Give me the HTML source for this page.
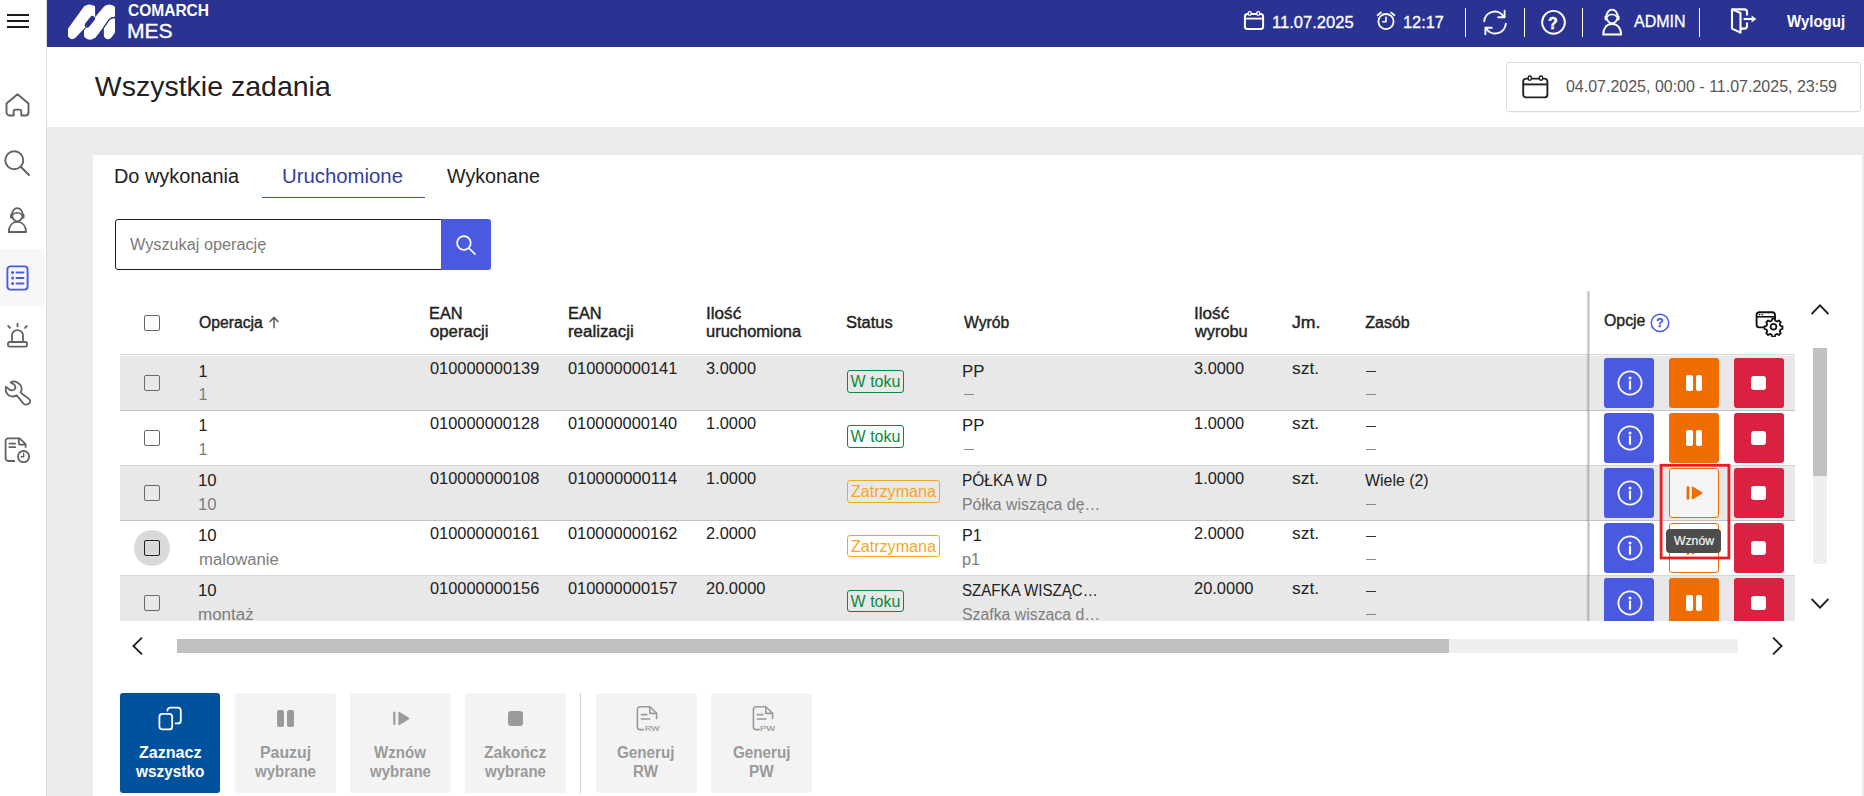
<!DOCTYPE html>
<html lang="pl"><head><meta charset="utf-8"><title>Wszystkie zadania - Comarch MES</title>
<style>
html,body{margin:0;padding:0}
body{width:1864px;height:796px;overflow:hidden;position:relative;background:#ececec;font-family:"Liberation Sans", sans-serif}
.r{position:absolute;display:block}
.t{position:absolute;white-space:nowrap;line-height:1;font-family:"Liberation Sans", sans-serif;transform-origin:0 50%}
</style></head><body>
<div class="r" style="left:0px;top:0px;width:1864px;height:796px;background:#ececec;"></div>
<div class="r" style="left:0px;top:0px;width:46px;height:796px;background:#fff;"></div>
<div class="r" style="left:46px;top:0px;width:1px;height:796px;background:#dcdcdc;"></div>
<div class="r" style="left:47px;top:0px;width:1817px;height:47px;background:#2a3392;"></div>
<div class="r" style="left:47px;top:47px;width:1817px;height:80px;background:#fff;"></div>
<div class="r" style="left:93px;top:155px;width:1769px;height:641px;background:#fff;"></div>
<div class="r" style="left:7px;top:14px;width:22px;height:2px;background:#1c1c1c;"></div>
<div class="r" style="left:7px;top:20px;width:22px;height:2px;background:#1c1c1c;"></div>
<div class="r" style="left:7px;top:26px;width:22px;height:2px;background:#1c1c1c;"></div>
<div class="r" style="left:0px;top:249px;width:45px;height:57px;background:#f7f7fa;border-radius:0 5px 5px 0"></div>
<svg class="r" style="left:3.6px;top:92px;" width="27" height="26" viewBox="0 0 27 26" fill="none"><path d="M2.5 11.4 L13.5 2.2 L24.5 11.4 V20.5 a3 3 0 0 1 -3 3 H17.3 V19.4 a1.8 1.8 0 0 0 -1.8 -1.8 h-4 a1.8 1.8 0 0 0 -1.8 1.8 V23.5 H5.5 a3 3 0 0 1 -3 -3 Z" stroke="#616161" stroke-width="1.9" stroke-linejoin="round"/></svg>
<svg class="r" style="left:3.4px;top:148.8px;" width="28" height="28" viewBox="0 0 28 28" fill="none"><circle cx="11.3" cy="11.3" r="9" stroke="#616161" stroke-width="1.9"/><path d="M18 18 L26 26" stroke="#616161" stroke-width="1.9" stroke-linecap="round"/></svg>
<svg class="r" style="left:0px;top:197px;" width="46" height="46" viewBox="0 0 46 46" fill="none"><ellipse cx="17.3" cy="17.7" rx="5.3" ry="6.6" stroke="#616161" stroke-width="1.8"/><path d="M11.3 18 v2.4 M23.3 18 v2.4" stroke="#616161" stroke-width="2.4" stroke-linecap="round"/><path d="M12.4 18.3 Q14.4 15.4 17 15.9 Q20 15.4 22.2 18.3" stroke="#616161" stroke-width="1.5"/><path d="M8.8 35 C9 28.5 12.5 24.9 17.3 24.9 C22.1 24.9 25.8 28.5 26 35 Z" stroke="#616161" stroke-width="1.9" stroke-linejoin="round"/></svg>
<svg class="r" style="left:5px;top:263.7px;" width="25" height="28" viewBox="0 0 25 28" fill="none"><rect x="2.4" y="2.4" width="20.2" height="23.2" rx="3" stroke="#4959e0" stroke-width="1.9"/><circle cx="7.6" cy="8.5" r="1.5" fill="#4959e0"/><circle cx="7.6" cy="14" r="1.5" fill="#4959e0"/><circle cx="7.6" cy="19.5" r="1.5" fill="#4959e0"/><path d="M11.5 8.5 h7 M11.5 14 h7 M11.5 19.5 h7" stroke="#4959e0" stroke-width="1.9" stroke-linecap="round"/></svg>
<svg class="r" style="left:5px;top:322px;" width="25" height="27" viewBox="0 0 25 27" fill="none"><path d="M7 20 V13.6 a5.5 5.5 0 0 1 11 0 V20" stroke="#616161" stroke-width="1.8"/><rect x="3" y="20" width="19" height="4.6" rx="1.6" stroke="#616161" stroke-width="1.8"/><path d="M12.5 1.6 v2.8 M3.2 4 l1.8 1.8 M21.8 4 l-1.8 1.8" stroke="#616161" stroke-width="1.8" stroke-linecap="round"/></svg>
<svg class="r" style="left:0px;top:370px;" width="46" height="46" viewBox="0 0 46 46" fill="none"><path d="M10.7 12.4 Q13 10.8 16 11.8 Q21.5 14 21.7 19 Q21.6 21 20.5 22.5 L28.9 28.9 Q31.5 31.8 28.6 33.8 Q26 35.6 23.4 33.6 L16.8 25.4 Q13 27.4 9.5 25.8 Q5 23 5.8 16.8 L9.8 19.9 Q12.6 21.2 14.8 19.2 Q16.4 16.8 14.2 14.5 Z" stroke="#616161" stroke-width="1.8" stroke-linejoin="round"/></svg>
<svg class="r" style="left:3px;top:436px;" width="29" height="29" viewBox="0 0 29 29" fill="none"><path d="M12 25 H5.2 a2.6 2.6 0 0 1 -2.6 -2.6 V5 a2.6 2.6 0 0 1 2.6 -2.6 H16.6 l6 5.8 V11.8" stroke="#616161" stroke-width="1.8" stroke-linejoin="round"/><path d="M15.8 2.8 V7 a1.6 1.6 0 0 0 1.6 1.6 h5" stroke="#616161" stroke-width="1.8" stroke-linejoin="round"/><path d="M6.4 7.6 h5.8 M6.4 11.2 h5.8" stroke="#616161" stroke-width="1.8" stroke-linecap="round"/><circle cx="20.6" cy="20.6" r="5.6" stroke="#616161" stroke-width="1.8"/><path d="M20.6 17.6 v3.2 h-2.4" stroke="#616161" stroke-width="1.5" stroke-linecap="round" stroke-linejoin="round"/></svg>
<svg class="r" style="left:62px;top:0px;" width="60" height="44" viewBox="0 0 60 44" fill="none"><g fill="#fff" stroke="#fff" stroke-width="3" stroke-linejoin="round"><path d="M7.5 29.2 L23.2 7.4 Q27 4.6 31.6 7.4 L31.6 16.4 L12.4 36.8 Q9.4 38.8 7.5 36 Z"/><path d="M23.5 31 L43.2 7.4 Q47 4.6 51.5 7.4 L51.5 16 L47.6 16.6 L32.4 36.6 Q27 40 23.5 36 Z"/><path d="M43.4 28.4 L48.8 20.4 L51.5 19.4 L51.5 32 L48 36.8 Q45.6 39 43.4 36 Z"/></g><path d="M30.4 18.6 L25.4 24.9" stroke="#2a3392" stroke-width="5.2" stroke-linecap="round"/><path d="M41.6 27.6 L47 19.8 Q48.6 17.6 53.2 17.3" stroke="#2a3392" stroke-width="1.3" fill="none"/></svg>
<span class="t" id="t0" style="left:127.79px;top:3px;font-size:16px;font-weight:700;color:#fff;transform:scaleX(0.9700);">COMARCH</span>
<span class="t" id="t1" style="left:126.98px;top:21px;font-size:20px;font-weight:400;color:#fff;transform:scaleX(1.0536);-webkit-text-stroke:0.36px #fff;">MES</span>
<svg class="r" style="left:1243px;top:10px;" width="22" height="21" viewBox="0 0 22 21" fill="none"><rect x="1.9" y="3.9" width="18.2" height="15.2" rx="2.6" stroke="#fff" stroke-width="2"/><path d="M1.9 8.6 h18.2" stroke="#fff" stroke-width="1.8"/><rect x="5.3" y="1.6" width="2.8" height="3.6" rx="1.2" fill="#2a3392" stroke="#fff" stroke-width="1.3"/><rect x="13.9" y="1.6" width="2.8" height="3.6" rx="1.2" fill="#2a3392" stroke="#fff" stroke-width="1.3"/></svg>
<span class="t" id="t2" style="left:1271.70px;top:15px;font-size:16px;font-weight:400;color:#fff;transform:scaleX(1.0343);-webkit-text-stroke:0.29px #fff;">11.07.2025</span>
<svg class="r" style="left:1375px;top:10px;" width="22" height="21" viewBox="0 0 22 21" fill="none"><circle cx="11" cy="11.6" r="7.6" stroke="#fff" stroke-width="1.8"/><path d="M11 7.2 v4.6 h-3.2" stroke="#fff" stroke-width="1.6" stroke-linecap="round" stroke-linejoin="round"/><path d="M2.6 5.2 l3.4 -2.8 M19.4 5.2 l-3.4 -2.8" stroke="#fff" stroke-width="1.8" stroke-linecap="round"/></svg>
<span class="t" id="t3" style="left:1403.46px;top:15px;font-size:16px;font-weight:400;color:#fff;transform:scaleX(1.0203);-webkit-text-stroke:0.29px #fff;">12:17</span>
<div class="r" style="left:1465.3px;top:8px;width:1.2px;height:29px;background:#fff;"></div>
<div class="r" style="left:1524.3px;top:8px;width:1.2px;height:29px;background:#fff;"></div>
<div class="r" style="left:1582.3px;top:8px;width:1.2px;height:29px;background:#fff;"></div>
<div class="r" style="left:1699.3px;top:8px;width:1.2px;height:29px;background:#fff;"></div>
<svg class="r" style="left:1481px;top:9px;" width="28" height="27" viewBox="0 0 28 27" fill="none"><path d="M3.2 12.2 a10.6 10.6 0 0 1 19.6 -4.6" stroke="#fff" stroke-width="1.9" stroke-linecap="round"/><path d="M23.6 1.8 v6.4 h-6.4" stroke="#fff" stroke-width="1.9" stroke-linecap="round" stroke-linejoin="round"/><path d="M24.8 14.8 a10.6 10.6 0 0 1 -19.6 4.6" stroke="#fff" stroke-width="1.9" stroke-linecap="round"/><path d="M4.4 25.2 v-6.4 h6.4" stroke="#fff" stroke-width="1.9" stroke-linecap="round" stroke-linejoin="round"/></svg>
<svg class="r" style="left:1540px;top:9px;" width="27" height="27" viewBox="0 0 27 27" fill="none"><circle cx="13.5" cy="13.3" r="11.4" stroke="#fff" stroke-width="1.9"/></svg>
<span class="t" id="t4" style="left:1548.04px;top:16px;font-size:16px;font-weight:700;color:#fff;-webkit-text-stroke:0.4px #fff;">?</span>
<svg class="r" style="left:1593.6px;top:-1.6px;" width="48" height="48" viewBox="0 0 46 46" fill="none"><ellipse cx="17.3" cy="17.7" rx="5.3" ry="6.6" stroke="#fff" stroke-width="1.8"/><path d="M11.3 18 v2.4 M23.3 18 v2.4" stroke="#fff" stroke-width="2.4" stroke-linecap="round"/><path d="M12.4 18.3 Q14.4 15.4 17 15.9 Q20 15.4 22.2 18.3" stroke="#fff" stroke-width="1.5"/><path d="M8.8 35 C9 28.5 12.5 24.9 17.3 24.9 C22.1 24.9 25.8 28.5 26 35 Z" stroke="#fff" stroke-width="1.9" stroke-linejoin="round"/></svg>
<span class="t" id="t5" style="left:1633.98px;top:14px;font-size:16px;font-weight:400;color:#fff;-webkit-text-stroke:0.29px #fff;">ADMIN</span>
<svg class="r" style="left:1729px;top:7px;" width="29" height="28" viewBox="0 0 29 28" fill="none"><path d="M11.5 6 L3 2.4 V21.6 L11.5 25.6 Z" stroke="#fff" stroke-width="2.1" stroke-linejoin="round"/><path d="M3 2.4 H15.4 a2.6 2.6 0 0 1 2.6 2.6 V8.4 M18 15.6 V19 a2.6 2.6 0 0 1 -2.6 2.6 H11.5" stroke="#fff" stroke-width="2.1" stroke-linejoin="round"/><path d="M14.6 12 h9" stroke="#fff" stroke-width="2.1"/><path d="M22.6 8.6 L27.4 12 L22.6 15.4 Z" fill="#fff"/></svg>
<span class="t" id="t6" style="left:1786.74px;top:14px;font-size:16px;font-weight:700;color:#fff;transform:scaleX(0.9387);">Wyloguj</span>
<span class="t" id="t7" style="left:94.78px;top:72px;font-size:28.5px;font-weight:400;color:#212121;">Wszystkie zadania</span>
<div class="r" style="left:1506px;top:62px;width:355px;height:50px;box-sizing:border-box;background:#fff;border:1px solid #dcdcdc;border-radius:3px;box-shadow:0 1px 1px rgba(0,0,0,.03)"></div>
<svg class="r" style="left:1521px;top:74px;" width="29" height="26" viewBox="0 0 29 26" fill="none"><rect x="2.2" y="4.6" width="24.2" height="18.8" rx="3" stroke="#212121" stroke-width="1.9"/><path d="M2.2 10.4 h24.2" stroke="#212121" stroke-width="1.9"/><rect x="7.2" y="2" width="3.2" height="4.2" rx="1.4" fill="#fff" stroke="#212121" stroke-width="1.4"/><rect x="18.4" y="2" width="3.2" height="4.2" rx="1.4" fill="#fff" stroke="#212121" stroke-width="1.4"/></svg>
<span class="t" id="t8" style="left:1565.91px;top:79px;font-size:16px;font-weight:400;color:#555;">04.07.2025, 00:00 - 11.07.2025, 23:59</span>
<span class="t" id="t9" style="left:113.92px;top:166px;font-size:20px;font-weight:400;color:#212121;transform:scaleX(0.9948);">Do wykonania</span>
<span class="t" id="t10" style="left:282.48px;top:166px;font-size:20px;font-weight:400;color:#303f9f;transform:scaleX(1.0171);">Uruchomione</span>
<span class="t" id="t11" style="left:446.82px;top:166px;font-size:20px;font-weight:400;color:#212121;transform:scaleX(0.9844);">Wykonane</span>
<div class="r" style="left:262px;top:197px;width:163px;height:1px;background:#3f51b5;"></div>
<div class="r" style="left:115px;top:219px;width:327px;height:51px;box-sizing:border-box;background:#fff;border:1px solid #1e1e1e;border-radius:3px 0 0 3px"></div>
<div class="r" style="left:441px;top:219px;width:50px;height:51px;background:#4959e0;border-radius:0 3px 3px 0"></div>
<span class="t" id="t12" style="left:129.85px;top:237px;font-size:16px;font-weight:400;color:#7a7a7a;transform:scaleX(1.0155);">Wyszukaj operację</span>
<svg class="r" style="left:455px;top:234px;" width="22" height="22" viewBox="0 0 22 22" fill="none"><circle cx="8.9" cy="9" r="6.8" stroke="#fff" stroke-width="1.7"/><path d="M13.8 14 L20 20.2" stroke="#fff" stroke-width="1.7" stroke-linecap="round"/></svg>
<div class="r" style="left:144px;top:315px;width:16px;height:16px;box-sizing:border-box;border:1.5px solid #6a6a6a;border-radius:2px"></div>
<span class="t" id="t13" style="left:198.77px;top:315px;font-size:16px;font-weight:400;color:#1f1f1f;transform:scaleX(0.9831);-webkit-text-stroke:0.42px #1f1f1f;">Operacja</span>
<svg class="r" style="left:267px;top:315px;" width="14" height="15" viewBox="0 0 14 15" fill="none"><path d="M7 13.2 V2.6 M2.6 7 L7 2.4 L11.4 7" stroke="#5a5a5a" stroke-width="1.5"/></svg>
<span class="t" id="t14" style="left:429.44px;top:306px;font-size:16px;font-weight:400;color:#1f1f1f;transform:scaleX(1.0202);-webkit-text-stroke:0.42px #1f1f1f;">EAN</span>
<span class="t" id="t15" style="left:430.09px;top:324px;font-size:16px;font-weight:400;color:#1f1f1f;transform:scaleX(1.0447);-webkit-text-stroke:0.42px #1f1f1f;">operacji</span>
<span class="t" id="t16" style="left:567.69px;top:306px;font-size:16px;font-weight:400;color:#1f1f1f;transform:scaleX(1.0202);-webkit-text-stroke:0.42px #1f1f1f;">EAN</span>
<span class="t" id="t17" style="left:567.70px;top:324px;font-size:16px;font-weight:400;color:#1f1f1f;transform:scaleX(1.0548);-webkit-text-stroke:0.42px #1f1f1f;">realizacji</span>
<span class="t" id="t18" style="left:705.50px;top:306px;font-size:16px;font-weight:400;color:#1f1f1f;transform:scaleX(1.0713);-webkit-text-stroke:0.42px #1f1f1f;">Ilość</span>
<span class="t" id="t19" style="left:705.72px;top:324px;font-size:16px;font-weight:400;color:#1f1f1f;transform:scaleX(1.0290);-webkit-text-stroke:0.42px #1f1f1f;">uruchomiona</span>
<span class="t" id="t20" style="left:846.13px;top:315px;font-size:16px;font-weight:400;color:#1f1f1f;transform:scaleX(1.0312);-webkit-text-stroke:0.42px #1f1f1f;">Status</span>
<span class="t" id="t21" style="left:963.75px;top:315px;font-size:16px;font-weight:400;color:#1f1f1f;transform:scaleX(0.9817);-webkit-text-stroke:0.42px #1f1f1f;">Wyrób</span>
<span class="t" id="t22" style="left:1193.75px;top:306px;font-size:16px;font-weight:400;color:#1f1f1f;transform:scaleX(1.0713);-webkit-text-stroke:0.42px #1f1f1f;">Ilość</span>
<span class="t" id="t23" style="left:1195.00px;top:324px;font-size:16px;font-weight:400;color:#1f1f1f;transform:scaleX(1.0204);-webkit-text-stroke:0.42px #1f1f1f;">wyrobu</span>
<span class="t" id="t24" style="left:1292.37px;top:315px;font-size:16px;font-weight:400;color:#1f1f1f;transform:scaleX(1.0997);-webkit-text-stroke:0.42px #1f1f1f;">Jm.</span>
<span class="t" id="t25" style="left:1365.31px;top:315px;font-size:16px;font-weight:400;color:#1f1f1f;-webkit-text-stroke:0.42px #1f1f1f;">Zasób</span>
<span class="t" id="t26" style="left:1603.76px;top:313px;font-size:16px;font-weight:400;color:#1f1f1f;transform:scaleX(0.9916);-webkit-text-stroke:0.42px #1f1f1f;">Opcje</span>
<div class="r" style="left:120px;top:354px;width:1675px;height:1px;background:#d9d9d9;"></div>
<div class="r" style="left:120px;top:355px;width:1675px;height:1px;background:#f3f3f3;"></div>
<svg class="r" style="left:1650px;top:313px;" width="20" height="20" viewBox="0 0 20 20" fill="none"><circle cx="10" cy="9.9" r="8.7" stroke="#4959e0" stroke-width="1.5"/></svg>
<span class="t" id="t27" style="left:1656.22px;top:317px;font-size:12px;font-weight:700;color:#4959e0;-webkit-text-stroke:0.3px #4959e0;">?</span>
<svg class="r" style="left:1754px;top:310px;" width="31" height="27" viewBox="0 0 31 27" fill="none"><path d="M12.4 17.4 H5.2 a2.6 2.6 0 0 1 -2.6 -2.6 V4.8 a2.6 2.6 0 0 1 2.6 -2.6 H18.4 a2.6 2.6 0 0 1 2.6 2.6 V8.6" stroke="#111" stroke-width="1.9" stroke-linecap="round"/><path d="M2.6 6.8 H21" stroke="#111" stroke-width="1.6"/><circle cx="5.6" cy="4.6" r=".8" fill="#111"/><circle cx="8.2" cy="4.6" r=".8" fill="#111"/><g transform="translate(19.5 16.7)"><path d="M-1.3 -8 h2.6 l.5 2 1.8 .8 1.8 -1.1 1.9 1.9 -1.1 1.8 .8 1.8 2 .5 v2.6 l-2 .5 -.8 1.8 1.1 1.8 -1.9 1.9 -1.8 -1.1 -1.8 .8 -.5 2 h-2.6 l-.5 -2 -1.8 -.8 -1.8 1.1 -1.9 -1.9 1.1 -1.8 -.8 -1.8 -2 -.5 v-2.6 l2 -.5 .8 -1.8 -1.1 -1.8 1.9 -1.9 1.8 1.1 1.8 -.8 Z" fill="#fff" stroke="#111" stroke-width="1.8" stroke-linejoin="round"/><circle r="2.9" stroke="#111" stroke-width="1.8"/></g></svg>
<svg class="r" style="left:1810px;top:303px;" width="20" height="13" viewBox="0 0 20 13" fill="none"><path d="M1.6 11 L10 2.4 L18.4 11" stroke="#222" stroke-width="1.9"/></svg>
<svg class="r" style="left:1810px;top:597px;" width="20" height="13" viewBox="0 0 20 13" fill="none"><path d="M1.6 2 L10 10.6 L18.4 2" stroke="#222" stroke-width="1.9"/></svg>
<svg class="r" style="left:131px;top:636px;" width="13" height="20" viewBox="0 0 13 20" fill="none"><path d="M11 1.6 L2.4 10 L11 18.4" stroke="#222" stroke-width="1.9"/></svg>
<svg class="r" style="left:1771px;top:636px;" width="13" height="20" viewBox="0 0 13 20" fill="none"><path d="M2 1.6 L10.6 10 L2 18.4" stroke="#222" stroke-width="1.9"/></svg>
<div class="r" style="left:1813px;top:348px;width:14px;height:216px;background:#efefef;"></div>
<div class="r" style="left:1813px;top:348px;width:14px;height:128px;background:#c1c1c1;"></div>
<div class="r" style="left:177px;top:639px;width:1561px;height:14px;background:#efefef;"></div>
<div class="r" style="left:177px;top:639px;width:1272px;height:14px;background:#c1c1c1;"></div>
<div class="r" style="left:120px;top:355px;width:1675px;height:266px;overflow:hidden">
<div class="r" style="left:0px;top:1px;width:1675px;height:54px;background:#e8e8e8;"></div>
<div class="r" style="left:0px;top:55px;width:1675px;height:1px;background:#c2c2c2;"></div>
<div class="r" style="left:24px;top:20px;width:16px;height:16px;box-sizing:border-box;border:1.5px solid #6a6a6a;border-radius:2px"></div>
<span class="t" id="t28" style="left:78.46px;top:9px;font-size:16px;font-weight:400;color:#212121;">1</span><span class="t" id="t29" style="left:78.46px;top:32px;font-size:16px;font-weight:400;color:#7d7d7d;">1</span>
<span class="t" id="t30" style="left:309.89px;top:6px;font-size:16px;font-weight:400;color:#212121;transform:scaleX(1.0240);">010000000139</span>
<span class="t" id="t31" style="left:448.14px;top:6px;font-size:16px;font-weight:400;color:#212121;transform:scaleX(1.0240);">010000000141</span>
<span class="t" id="t32" style="left:585.73px;top:6px;font-size:16px;font-weight:400;color:#212121;transform:scaleX(1.0225);">3.0000</span>
<div class="r" style="left:727px;top:15px;width:57px;height:23px;box-sizing:border-box;border:1px solid #0a8a3c;border-radius:3px"></div>
<span class="t" id="t33" style="left:730.61px;top:19px;font-size:16px;font-weight:400;color:#0a8a3c;">W toku</span>
<span class="t" id="t34" style="left:841.96px;top:9px;font-size:16px;font-weight:400;color:#212121;transform:scaleX(1.0497);">PP</span><div class="r" style="left:843.55px;top:38.5px;width:10.5px;height:1.4px;background:#8a8a8a;"></div>
<span class="t" id="t35" style="left:1073.98px;top:6px;font-size:16px;font-weight:400;color:#212121;transform:scaleX(1.0225);">3.0000</span>
<span class="t" id="t36" style="left:1171.76px;top:6px;font-size:16px;font-weight:400;color:#212121;transform:scaleX(1.0866);">szt.</span>
<div class="r" style="left:1245.8px;top:16px;width:10.5px;height:1.4px;background:#333;"></div><div class="r" style="left:1245.8px;top:38.5px;width:10.5px;height:1.4px;background:#8a8a8a;"></div>
<div class="r" style="left:1484px;top:3px;width:50px;height:50px;background:#4959e0;border-radius:3px"></div>
<svg class="r" style="left:1496.6px;top:15.199999999999989px" width="26" height="26" viewBox="0 0 26 26" fill="none"><circle cx="13" cy="13" r="11.6" stroke="#fff" stroke-width="1.8"/><circle cx="13" cy="8" r="1.5" fill="#fff"/><path d="M13 11.6 v7.2" stroke="#fff" stroke-width="2.2" stroke-linecap="round"/></svg>
<div class="r" style="left:1549px;top:3px;width:50px;height:50px;background:#ef6c00;border-radius:3px"></div>
<div class="r" style="left:1566px;top:20px;width:6.5px;height:16px;background:#fff;border-radius:2px"></div>
<div class="r" style="left:1575.8px;top:20px;width:6.5px;height:16px;background:#fff;border-radius:2px"></div>
<div class="r" style="left:1614px;top:3px;width:50px;height:50px;background:#db2142;border-radius:3px"></div>
<div class="r" style="left:1631.2px;top:21.19999999999999px;width:14.6px;height:13.8px;background:#fff;border-radius:3px"></div>
<div class="r" style="left:0px;top:56px;width:1675px;height:54px;background:#fff;"></div>
<div class="r" style="left:0px;top:110px;width:1675px;height:1px;background:#d6d6d6;"></div>
<div class="r" style="left:24px;top:75px;width:16px;height:16px;box-sizing:border-box;border:1.5px solid #6a6a6a;border-radius:2px"></div>
<span class="t" id="t37" style="left:78.46px;top:63px;font-size:16px;font-weight:400;color:#212121;">1</span><span class="t" id="t38" style="left:78.46px;top:87px;font-size:16px;font-weight:400;color:#7d7d7d;">1</span>
<span class="t" id="t39" style="left:309.89px;top:61px;font-size:16px;font-weight:400;color:#212121;transform:scaleX(1.0236);">010000000128</span>
<span class="t" id="t40" style="left:448.14px;top:61px;font-size:16px;font-weight:400;color:#212121;transform:scaleX(1.0228);">010000000140</span>
<span class="t" id="t41" style="left:585.58px;top:61px;font-size:16px;font-weight:400;color:#212121;transform:scaleX(1.0256);">1.0000</span>
<div class="r" style="left:727px;top:70px;width:57px;height:23px;box-sizing:border-box;border:1px solid #0a8a3c;border-radius:3px"></div>
<span class="t" id="t42" style="left:730.61px;top:74px;font-size:16px;font-weight:400;color:#0a8a3c;">W toku</span>
<span class="t" id="t43" style="left:841.96px;top:63px;font-size:16px;font-weight:400;color:#212121;transform:scaleX(1.0497);">PP</span><div class="r" style="left:843.55px;top:93.5px;width:10.5px;height:1.4px;background:#8a8a8a;"></div>
<span class="t" id="t44" style="left:1073.83px;top:61px;font-size:16px;font-weight:400;color:#212121;transform:scaleX(1.0256);">1.0000</span>
<span class="t" id="t45" style="left:1171.76px;top:61px;font-size:16px;font-weight:400;color:#212121;transform:scaleX(1.0866);">szt.</span>
<div class="r" style="left:1245.8px;top:71px;width:10.5px;height:1.4px;background:#333;"></div><div class="r" style="left:1245.8px;top:93.5px;width:10.5px;height:1.4px;background:#8a8a8a;"></div>
<div class="r" style="left:1484px;top:58px;width:50px;height:50px;background:#4959e0;border-radius:3px"></div>
<svg class="r" style="left:1496.6px;top:70.19999999999999px" width="26" height="26" viewBox="0 0 26 26" fill="none"><circle cx="13" cy="13" r="11.6" stroke="#fff" stroke-width="1.8"/><circle cx="13" cy="8" r="1.5" fill="#fff"/><path d="M13 11.6 v7.2" stroke="#fff" stroke-width="2.2" stroke-linecap="round"/></svg>
<div class="r" style="left:1549px;top:58px;width:50px;height:50px;background:#ef6c00;border-radius:3px"></div>
<div class="r" style="left:1566px;top:75px;width:6.5px;height:16px;background:#fff;border-radius:2px"></div>
<div class="r" style="left:1575.8px;top:75px;width:6.5px;height:16px;background:#fff;border-radius:2px"></div>
<div class="r" style="left:1614px;top:58px;width:50px;height:50px;background:#db2142;border-radius:3px"></div>
<div class="r" style="left:1631.2px;top:76.19999999999999px;width:14.6px;height:13.8px;background:#fff;border-radius:3px"></div>
<div class="r" style="left:0px;top:111px;width:1675px;height:54px;background:#e8e8e8;"></div>
<div class="r" style="left:0px;top:165px;width:1675px;height:1px;background:#c2c2c2;"></div>
<div class="r" style="left:24px;top:130px;width:16px;height:16px;box-sizing:border-box;border:1.5px solid #6a6a6a;border-radius:2px"></div>
<span class="t" id="t46" style="left:78.41px;top:118px;font-size:16px;font-weight:400;color:#212121;transform:scaleX(1.0436);">10</span><span class="t" id="t47" style="left:78.41px;top:142px;font-size:16px;font-weight:400;color:#7d7d7d;transform:scaleX(1.0436);">10</span>
<span class="t" id="t48" style="left:309.89px;top:116px;font-size:16px;font-weight:400;color:#212121;transform:scaleX(1.0236);">010000000108</span>
<span class="t" id="t49" style="left:448.14px;top:116px;font-size:16px;font-weight:400;color:#212121;transform:scaleX(1.0330);">010000000114</span>
<span class="t" id="t50" style="left:585.58px;top:116px;font-size:16px;font-weight:400;color:#212121;transform:scaleX(1.0256);">1.0000</span>
<div class="r" style="left:727px;top:125px;width:93px;height:23px;box-sizing:border-box;border:1px solid #f5a623;border-radius:3px"></div>
<span class="t" id="t51" style="left:730.55px;top:129px;font-size:16px;font-weight:400;color:#f5a623;transform:scaleX(1.0049);">Zatrzymana</span>
<span class="t" id="t52" style="left:842.06px;top:118px;font-size:16px;font-weight:400;color:#212121;transform:scaleX(0.9663);">PÓŁKA W D</span><span class="t" id="t53" style="left:842.03px;top:142px;font-size:16px;font-weight:400;color:#7d7d7d;transform:scaleX(0.9906);">Półka wisząca dę…</span>
<span class="t" id="t54" style="left:1073.83px;top:116px;font-size:16px;font-weight:400;color:#212121;transform:scaleX(1.0256);">1.0000</span>
<span class="t" id="t55" style="left:1171.76px;top:116px;font-size:16px;font-weight:400;color:#212121;transform:scaleX(1.0866);">szt.</span>
<span class="t" id="t56" style="left:1245.36px;top:118px;font-size:16px;font-weight:400;color:#212121;transform:scaleX(0.9943);">Wiele (2)</span><div class="r" style="left:1245.8px;top:148.5px;width:10.5px;height:1.4px;background:#8a8a8a;"></div>
<div class="r" style="left:1484px;top:113px;width:50px;height:50px;background:#4959e0;border-radius:3px"></div>
<svg class="r" style="left:1496.6px;top:125.19999999999999px" width="26" height="26" viewBox="0 0 26 26" fill="none"><circle cx="13" cy="13" r="11.6" stroke="#fff" stroke-width="1.8"/><circle cx="13" cy="8" r="1.5" fill="#fff"/><path d="M13 11.6 v7.2" stroke="#fff" stroke-width="2.2" stroke-linecap="round"/></svg>
<div class="r" style="left:1549px;top:113px;width:50px;height:50px;box-sizing:border-box;background:#f5f5f5;border:1px solid #ef6c00;border-radius:3px"></div>
<svg class="r" style="left:1565px;top:130px" width="18" height="16" viewBox="0 0 18 16"><rect x="1.6" y="1.2" width="2.7" height="13.6" rx="1.3" fill="#ef6c00"/><path d="M6.8 2.4 a.8 .8 0 0 1 1.2 -.7 l9 5.6 a.8 .8 0 0 1 0 1.4 l-9 5.6 a.8 .8 0 0 1 -1.2 -.7 Z" fill="#ef6c00"/></svg>
<div class="r" style="left:1614px;top:113px;width:50px;height:50px;background:#db2142;border-radius:3px"></div>
<div class="r" style="left:1631.2px;top:131.2px;width:14.6px;height:13.8px;background:#fff;border-radius:3px"></div>
<div class="r" style="left:0px;top:166px;width:1675px;height:54px;background:#fff;"></div>
<div class="r" style="left:0px;top:220px;width:1675px;height:1px;background:#d6d6d6;"></div>
<div class="r" style="left:14px;top:175px;width:36px;height:36px;background:#d9d9d9;border-radius:50%"></div>
<div class="r" style="left:24px;top:185px;width:16px;height:16px;box-sizing:border-box;border:1.5px solid #222;border-radius:2px"></div>
<span class="t" id="t57" style="left:78.41px;top:173px;font-size:16px;font-weight:400;color:#212121;transform:scaleX(1.0436);">10</span><span class="t" id="t58" style="left:78.50px;top:197px;font-size:16px;font-weight:400;color:#7d7d7d;transform:scaleX(1.0427);">malowanie</span>
<span class="t" id="t59" style="left:309.89px;top:171px;font-size:16px;font-weight:400;color:#212121;transform:scaleX(1.0240);">010000000161</span>
<span class="t" id="t60" style="left:448.14px;top:171px;font-size:16px;font-weight:400;color:#212121;transform:scaleX(1.0241);">010000000162</span>
<span class="t" id="t61" style="left:585.73px;top:171px;font-size:16px;font-weight:400;color:#212121;transform:scaleX(1.0225);">2.0000</span>
<div class="r" style="left:727px;top:180px;width:93px;height:22px;box-sizing:border-box;border:1px solid #f5a623;border-radius:3px"></div>
<span class="t" id="t62" style="left:730.55px;top:184px;font-size:16px;font-weight:400;color:#f5a623;transform:scaleX(1.0049);">Zatrzymana</span>
<span class="t" id="t63" style="left:842.01px;top:173px;font-size:16px;font-weight:400;color:#212121;transform:scaleX(1.0128);">P1</span><span class="t" id="t64" style="left:842.22px;top:197px;font-size:16px;font-weight:400;color:#7d7d7d;transform:scaleX(1.0129);">p1</span>
<span class="t" id="t65" style="left:1073.98px;top:171px;font-size:16px;font-weight:400;color:#212121;transform:scaleX(1.0225);">2.0000</span>
<span class="t" id="t66" style="left:1171.76px;top:171px;font-size:16px;font-weight:400;color:#212121;transform:scaleX(1.0866);">szt.</span>
<div class="r" style="left:1245.8px;top:181px;width:10.5px;height:1.4px;background:#333;"></div><div class="r" style="left:1245.8px;top:203.5px;width:10.5px;height:1.4px;background:#8a8a8a;"></div>
<div class="r" style="left:1484px;top:168px;width:50px;height:50px;background:#4959e0;border-radius:3px"></div>
<svg class="r" style="left:1496.6px;top:180.20000000000005px" width="26" height="26" viewBox="0 0 26 26" fill="none"><circle cx="13" cy="13" r="11.6" stroke="#fff" stroke-width="1.8"/><circle cx="13" cy="8" r="1.5" fill="#fff"/><path d="M13 11.6 v7.2" stroke="#fff" stroke-width="2.2" stroke-linecap="round"/></svg>
<div class="r" style="left:1549px;top:168px;width:50px;height:50px;box-sizing:border-box;background:#fff;border:1px solid #ef6c00;border-radius:3px"></div>
<svg class="r" style="left:1565px;top:185px" width="18" height="16" viewBox="0 0 18 16"><rect x="1.6" y="1.2" width="2.7" height="13.6" rx="1.3" fill="#ef6c00"/><path d="M6.8 2.4 a.8 .8 0 0 1 1.2 -.7 l9 5.6 a.8 .8 0 0 1 0 1.4 l-9 5.6 a.8 .8 0 0 1 -1.2 -.7 Z" fill="#ef6c00"/></svg>
<div class="r" style="left:1614px;top:168px;width:50px;height:50px;background:#db2142;border-radius:3px"></div>
<div class="r" style="left:1631.2px;top:186.20000000000005px;width:14.6px;height:13.8px;background:#fff;border-radius:3px"></div>
<div class="r" style="left:0px;top:221px;width:1675px;height:54px;background:#e8e8e8;"></div>
<div class="r" style="left:0px;top:275px;width:1675px;height:1px;background:#c2c2c2;"></div>
<div class="r" style="left:24px;top:240px;width:16px;height:16px;box-sizing:border-box;border:1.5px solid #6a6a6a;border-radius:2px"></div>
<span class="t" id="t67" style="left:78.41px;top:228px;font-size:16px;font-weight:400;color:#212121;transform:scaleX(1.0436);">10</span><span class="t" id="t68" style="left:78.48px;top:252px;font-size:16px;font-weight:400;color:#7d7d7d;transform:scaleX(1.0621);">montaż</span>
<span class="t" id="t69" style="left:309.89px;top:226px;font-size:16px;font-weight:400;color:#212121;transform:scaleX(1.0236);">010000000156</span>
<span class="t" id="t70" style="left:448.14px;top:226px;font-size:16px;font-weight:400;color:#212121;transform:scaleX(1.0241);">010000000157</span>
<span class="t" id="t71" style="left:585.72px;top:226px;font-size:16px;font-weight:400;color:#212121;transform:scaleX(1.0278);">20.0000</span>
<div class="r" style="left:727px;top:235px;width:57px;height:22px;box-sizing:border-box;border:1px solid #0a8a3c;border-radius:3px"></div>
<span class="t" id="t72" style="left:730.61px;top:239px;font-size:16px;font-weight:400;color:#0a8a3c;">W toku</span>
<span class="t" id="t73" style="left:842.31px;top:228px;font-size:16px;font-weight:400;color:#212121;transform:scaleX(0.9433);">SZAFKA WISZĄC…</span><span class="t" id="t74" style="left:842.26px;top:252px;font-size:16px;font-weight:400;color:#7d7d7d;transform:scaleX(0.9890);">Szafka wisząca d…</span>
<span class="t" id="t75" style="left:1073.97px;top:226px;font-size:16px;font-weight:400;color:#212121;transform:scaleX(1.0278);">20.0000</span>
<span class="t" id="t76" style="left:1171.76px;top:226px;font-size:16px;font-weight:400;color:#212121;transform:scaleX(1.0866);">szt.</span>
<div class="r" style="left:1245.8px;top:236px;width:10.5px;height:1.4px;background:#333;"></div><div class="r" style="left:1245.8px;top:258.5px;width:10.5px;height:1.4px;background:#8a8a8a;"></div>
<div class="r" style="left:1484px;top:223px;width:50px;height:50px;background:#4959e0;border-radius:3px"></div>
<svg class="r" style="left:1496.6px;top:235.20000000000005px" width="26" height="26" viewBox="0 0 26 26" fill="none"><circle cx="13" cy="13" r="11.6" stroke="#fff" stroke-width="1.8"/><circle cx="13" cy="8" r="1.5" fill="#fff"/><path d="M13 11.6 v7.2" stroke="#fff" stroke-width="2.2" stroke-linecap="round"/></svg>
<div class="r" style="left:1549px;top:223px;width:50px;height:50px;background:#ef6c00;border-radius:3px"></div>
<div class="r" style="left:1566px;top:240px;width:6.5px;height:16px;background:#fff;border-radius:2px"></div>
<div class="r" style="left:1575.8px;top:240px;width:6.5px;height:16px;background:#fff;border-radius:2px"></div>
<div class="r" style="left:1614px;top:223px;width:50px;height:50px;background:#db2142;border-radius:3px"></div>
<div class="r" style="left:1631.2px;top:241.20000000000005px;width:14.6px;height:13.8px;background:#fff;border-radius:3px"></div>
</div>
<div class="r" style="left:1586px;top:291px;width:3px;height:330px;background:linear-gradient(to right, rgba(0,0,0,0), rgba(0,0,0,.10) 40%, rgba(0,0,0,.30));"></div>
<div class="r" style="left:1589px;top:291px;width:1px;height:330px;background:#d6d9f4;"></div>
<svg class="r" style="left:1658px;top:462px;" width="74" height="99" viewBox="0 0 74 99" fill="none"><rect x="3.1" y="3.3" width="67.8" height="92.7" stroke="#ec1c24" stroke-width="2.8"/></svg>
<div class="r" style="left:1666px;top:529px;width:55px;height:24.3px;background:#4d4d4d;border-radius:4px"></div>
<span class="t" id="t77" style="left:1673.73px;top:535px;font-size:12px;font-weight:400;color:#f4f4f4;transform:scaleX(1.0159);-webkit-text-stroke:0.22px #f4f4f4;">Wznów</span>
<div class="r" style="left:120px;top:693px;width:100px;height:100px;background:#00529e;border-radius:3px"></div>
<div class="r" style="left:235px;top:693px;width:101px;height:100px;background:#f3f3f3;border-radius:3px"></div>
<div class="r" style="left:350px;top:693px;width:101px;height:100px;background:#f3f3f3;border-radius:3px"></div>
<div class="r" style="left:465px;top:693px;width:101px;height:100px;background:#f3f3f3;border-radius:3px"></div>
<div class="r" style="left:596px;top:693px;width:101px;height:100px;background:#f3f3f3;border-radius:3px"></div>
<div class="r" style="left:711px;top:693px;width:101px;height:100px;background:#f3f3f3;border-radius:3px"></div>
<div class="r" style="left:580px;top:693px;width:1px;height:100px;background:#cfcfcf;"></div>
<span class="t" id="t78" style="left:138.82px;top:745px;font-size:16px;font-weight:700;color:#fff;transform:scaleX(1.0047);">Zaznacz</span>
<span class="t" id="t79" style="left:136.00px;top:764px;font-size:16px;font-weight:700;color:#fff;transform:scaleX(0.9603);">wszystko</span>
<span class="t" id="t80" style="left:259.89px;top:745px;font-size:16px;font-weight:700;color:#9a9a9a;transform:scaleX(0.9902);">Pauzuj</span>
<span class="t" id="t81" style="left:255.13px;top:764px;font-size:16px;font-weight:700;color:#9a9a9a;transform:scaleX(0.9383);">wybrane</span>
<span class="t" id="t82" style="left:374.44px;top:745px;font-size:16px;font-weight:700;color:#9a9a9a;transform:scaleX(0.9415);">Wznów</span>
<span class="t" id="t83" style="left:370.23px;top:764px;font-size:16px;font-weight:700;color:#9a9a9a;transform:scaleX(0.9383);">wybrane</span>
<span class="t" id="t84" style="left:484.35px;top:745px;font-size:16px;font-weight:700;color:#9a9a9a;transform:scaleX(0.9732);">Zakończ</span>
<span class="t" id="t85" style="left:485.23px;top:764px;font-size:16px;font-weight:700;color:#9a9a9a;transform:scaleX(0.9383);">wybrane</span>
<span class="t" id="t86" style="left:617.40px;top:745px;font-size:16px;font-weight:700;color:#9a9a9a;transform:scaleX(0.9512);">Generuj</span>
<span class="t" id="t87" style="left:633.03px;top:764px;font-size:16px;font-weight:700;color:#9a9a9a;transform:scaleX(0.9457);">RW</span>
<span class="t" id="t88" style="left:732.90px;top:745px;font-size:16px;font-weight:700;color:#9a9a9a;transform:scaleX(0.9512);">Generuj</span>
<span class="t" id="t89" style="left:748.52px;top:764px;font-size:16px;font-weight:700;color:#9a9a9a;transform:scaleX(0.9633);">PW</span>
<svg class="r" style="left:157px;top:705px;" width="26" height="27" viewBox="0 0 26 27" fill="none"><rect x="2.4" y="8.8" width="12.8" height="15.6" rx="3" stroke="#fff" stroke-width="1.8"/><path d="M10.4 5.6 a3 3 0 0 1 3 -3 H20.8 a3 3 0 0 1 3 3 V15.4 a3 3 0 0 1 -3 3 H18.6" stroke="#fff" stroke-width="1.8" stroke-linecap="round"/></svg>
<div class="r" style="left:277px;top:710.3px;width:7px;height:16.8px;background:#9a9a9a;border-radius:2px"></div>
<div class="r" style="left:287px;top:710.3px;width:7px;height:16.8px;background:#9a9a9a;border-radius:2px"></div>
<svg class="r" style="left:392px;top:710px;" width="19" height="17" viewBox="0 0 19 17" fill="none"><rect x="1.2" y="1.6" width="2.2" height="13.6" rx="1.1" fill="#9a9a9a"/><path d="M6.4 2.6 a.8 .8 0 0 1 1.2 -.7 l9.4 5.9 a.8 .8 0 0 1 0 1.4 l-9.4 5.9 a.8 .8 0 0 1 -1.2 -.7 Z" fill="#9a9a9a"/></svg>
<div class="r" style="left:508px;top:711.2px;width:15px;height:14.6px;background:#9a9a9a;border-radius:3px"></div>
<svg class="r" style="left:635px;top:705px;" width="26" height="28" viewBox="0 0 26 28" fill="none"><path d="M8.4 24.6 H5 a2.6 2.6 0 0 1 -2.6 -2.6 V4.4 a2.6 2.6 0 0 1 2.6 -2.6 H14.8 l6.8 6.6 V13.4" stroke="#9a9a9a" stroke-width="1.6" stroke-linejoin="round" stroke-linecap="round"/><path d="M14.8 1.8 V8.4 h6.8" stroke="#9a9a9a" stroke-width="1.6" stroke-linejoin="round"/><path d="M6.4 9.6 h5.6 M6.4 14 h8.4" stroke="#9a9a9a" stroke-width="1.6" stroke-linecap="round"/></svg><span class="t" id="t90" style="left:644.87px;top:725px;font-size:8px;font-weight:400;color:#9a9a9a;transform:scaleX(1.0953);-webkit-text-stroke:0.21px #9a9a9a;">RW</span>
<svg class="r" style="left:750.5px;top:705px;" width="26" height="28" viewBox="0 0 26 28" fill="none"><path d="M8.4 24.6 H5 a2.6 2.6 0 0 1 -2.6 -2.6 V4.4 a2.6 2.6 0 0 1 2.6 -2.6 H14.8 l6.8 6.6 V13.4" stroke="#9a9a9a" stroke-width="1.6" stroke-linejoin="round" stroke-linecap="round"/><path d="M14.8 1.8 V8.4 h6.8" stroke="#9a9a9a" stroke-width="1.6" stroke-linejoin="round"/><path d="M6.4 9.6 h5.6 M6.4 14 h8.4" stroke="#9a9a9a" stroke-width="1.6" stroke-linecap="round"/></svg><span class="t" id="t91" style="left:760.34px;top:725px;font-size:8px;font-weight:400;color:#9a9a9a;transform:scaleX(1.1524);-webkit-text-stroke:0.21px #9a9a9a;">PW</span>
</body></html>
